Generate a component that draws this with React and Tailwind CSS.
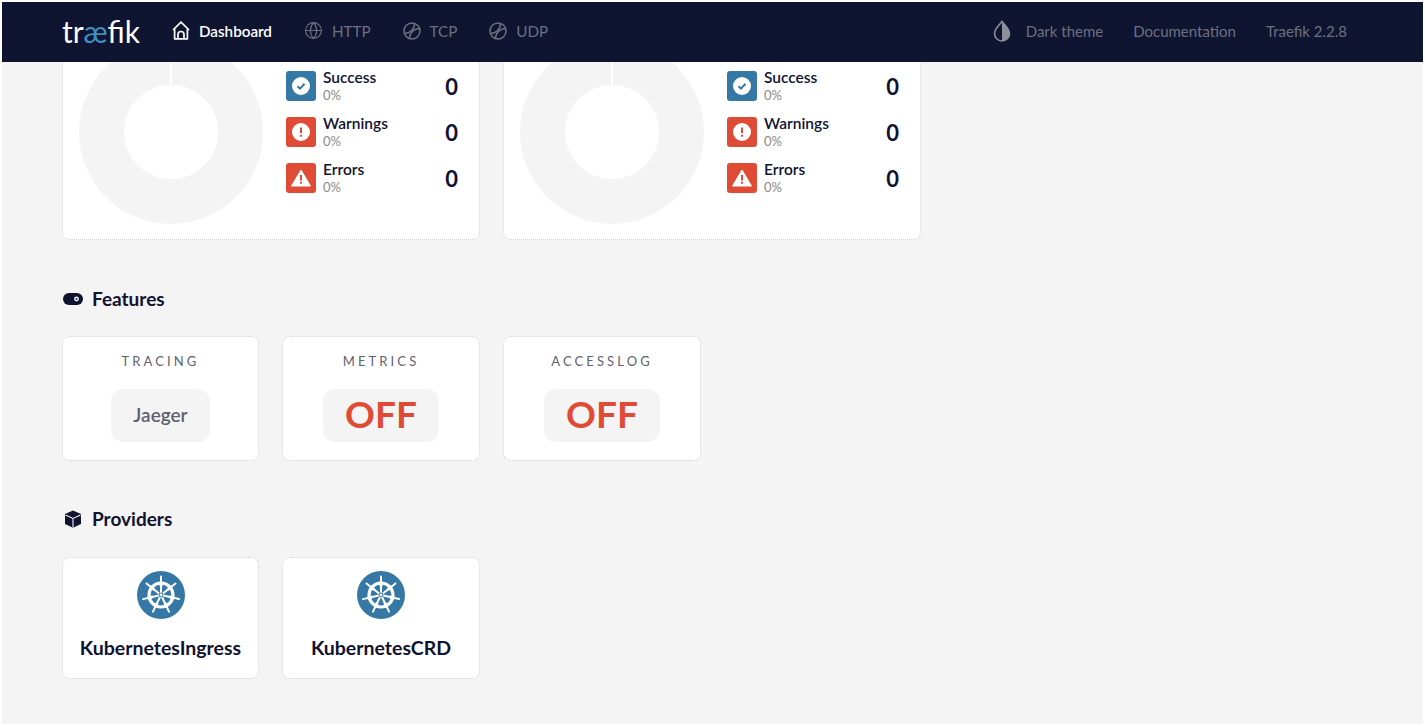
import React from "react";
import { Globe } from "lucide-react";

const font = "font-['Lato','Noto_Sans',sans-serif]";

const HomeIcon = () => (
  <svg width="18" height="19" viewBox="0 0 18 19" fill="none" stroke="currentColor" strokeWidth="1.7" strokeLinejoin="round">
    <path d="M1 9 9 1.2 17 9M2.6 8v9.8h12.8V8" />
    <path d="M6 17.8v-4.3a3 3 0 0 1 6 0v4.3" />
  </svg>
);

const BallIcon = () => (
  <svg width="18" height="18" viewBox="0 0 18 18" fill="none" stroke="currentColor" strokeWidth="1.5">
    <circle cx="9" cy="9" r="8" />
    <path d="M11.5 1.4C11.5 7 7 11.5 1.4 11.5" />
    <path d="M16.6 6.5C11 6.5 6.5 11 6.5 16.6" />
  </svg>
);

const DropIcon = () => (
  <svg width="18" height="22" viewBox="0 0 18 22">
    <path d="M9 1.5C6.5 5 1.5 8.5 1.5 13.5a7.5 7.5 0 0 0 15 0C16.5 8.5 11.5 5 9 1.5Z" fill="none" stroke="#8d8f99" strokeWidth="1.6" />
    <path d="M9 1.5C11.5 5 16.5 8.5 16.5 13.5A7.5 7.5 0 0 1 9 21Z" fill="#8d8f99" />
  </svg>
);

const ToggleIcon = () => (
  <svg width="20" height="12" viewBox="0 0 20 12" className="ml-[1px]">
    <rect width="20" height="12" rx="6" fill="#10132f" />
    <circle cx="13.5" cy="6" r="2.4" fill="#f4f4f4" />
    <circle cx="13.5" cy="6" r="0.9" fill="#10132f" />
  </svg>
);

const CubeIcon = () => (
  <svg width="18" height="18" viewBox="0 0 18 18" className="ml-[2px]">
    <path d="M9 .5 17 4v10l-8 3.7L1 14V4Z" fill="#10132f" />
    <path d="M1.5 5 9 8.5 16.5 5M9 8.5V17.5" fill="none" stroke="#f4f4f4" strokeWidth="1.1" />
  </svg>
);

const Helm = () => (
  <svg width="48" height="48" viewBox="0 0 48 48">
    <circle cx="24" cy="24" r="24" fill="#3578a5" />
    <g stroke="#fff" strokeLinecap="round">
      <circle cx="24" cy="24" r="12" fill="none" strokeWidth="3.2" />
      {[0, 51.4, 102.8, 154.3, 205.7, 257.1, 308.6].map((a) => (
        <g key={a} transform={`rotate(${a} 24 24)`}>
          <path d="M24 24V5.5" strokeWidth="2" />
          <path d="M24 14.5v-3" strokeWidth="3" />
        </g>
      ))}
    </g>
    <circle cx="24" cy="24" r="2.4" fill="#3578a5" />
    <circle cx="24" cy="24" r="1.4" fill="#fff" />
  </svg>
);

const StatusIcon = ({ kind }) => {
  if (kind === "success") {
    return (
      <svg width="18" height="18" viewBox="0 0 18 18">
        <circle cx="9" cy="9" r="9" fill="#fff" />
        <path d="M5.5 9.2 8 11.6l4.5-4.8" fill="none" stroke="#3578a5" strokeWidth="2" />
      </svg>
    );
  }
  if (kind === "warning") {
    return (
      <svg width="18" height="18" viewBox="0 0 18 18">
        <circle cx="9" cy="9" r="9" fill="#fff" />
        <path d="M9 4.5v5.5M9 11.7v2" stroke="#e04b35" strokeWidth="2" />
      </svg>
    );
  }
  return (
    <svg width="20" height="18" viewBox="0 0 20 18">
      <path d="M10 1 19.5 17H.5Z" fill="#fff" stroke="#fff" strokeLinejoin="round" />
      <path d="M10 6v5.5M10 12.8v2" stroke="#e04b35" strokeWidth="2" />
    </svg>
  );
};

const NavItem = ({ icon, label, active }) => (
  <a href="#" className={`flex items-center gap-[9px] text-[15.2px] ${active ? "text-white font-semibold" : "text-[#6d7080]"}`}>
    {icon}
    <span>{label}</span>
  </a>
);

const Donut = () => (
  <svg width="184" height="184" viewBox="0 0 184 184" className="shrink-0">
    <circle cx="92" cy="92" r="69.5" fill="none" stroke="#f4f4f4" strokeWidth="45" />
    <path d="M92 0v46" stroke="#fff" strokeWidth="2" />
  </svg>
);

const rows = [
  { name: "Success", kind: "success", bg: "bg-[#3578a5]" },
  { name: "Warnings", kind: "warning", bg: "bg-[#e04b35]" },
  { name: "Errors", kind: "error", bg: "bg-[#e04b35]" },
];

const StatsCard = () => (
  <div className="w-[418px] h-[218px] flex gap-[23px] pt-[17px] pl-[16px] pr-[21px] bg-white rounded-lg border border-dotted border-[#cfcfcf]">
    <Donut />
    <div className="flex-1 flex flex-col gap-[16px] pt-[31px]">
      {rows.map((r) => (
        <div key={r.name} className="flex items-center h-[30px]">
          <div className={`w-[30px] h-[30px] rounded-[3px] flex items-center justify-center ${r.bg}`}>
            <StatusIcon kind={r.kind} />
          </div>
          <div className="ml-[7px] mb-[1px] flex-1 flex flex-col">
            <span className="text-[15.5px] leading-[17px] font-semibold text-[#10132f]">{r.name}</span>
            <span className="mt-[1px] text-[13px] leading-[16px] text-[#8a8a8a]">0%</span>
          </div>
          <span className="text-[22px] font-bold text-[#10132f]">0</span>
        </div>
      ))}
    </div>
  </div>
);

const FeatureCard = ({ label, value, off }) => (
  <div className="h-[125px] bg-white rounded-lg border border-dotted border-[#cfcfcf] flex flex-col items-center pt-[15px]">
    <div className="text-[13px] leading-[18px] tracking-[0.24em] text-[#5f616e]">{label}</div>
    {off ? (
      <div className="mt-[19px] h-[53px] w-[116px] pb-[4px] rounded-xl bg-[#f4f4f4] flex items-center justify-center text-[37px] font-bold text-[#e04b35]">{value}</div>
    ) : (
      <div className="mt-[19px] h-[53px] w-[99px] rounded-xl bg-[#f4f4f4] flex items-center justify-center text-[19px] font-semibold text-[#5f616e]">{value}</div>
    )}
  </div>
);

const ProviderCard = ({ name }) => (
  <div className="h-[122px] bg-white rounded-lg border border-dotted border-[#cfcfcf] flex flex-col items-center pt-[13px]">
    <Helm />
    <div className="mt-[16px] text-[19.5px] leading-[26px] font-bold text-[#10132f]">{name}</div>
  </div>
);

export default function App() {
  return (
    <div className={`h-[726px] flex flex-col overflow-hidden bg-[#f4f4f4] border-2 border-white ${font}`}>
      <header className="relative z-10 h-[60px] shrink-0 bg-[#0f1431] flex items-center justify-between pb-[2px] pl-[60px] pr-[76px]">
        <div className="flex items-center">
          <a href="#" className="w-[110px] text-[30px] leading-none text-white">
            tr<span className="text-[#3f8fc4]">æ</span>fik
          </a>
          <div className="flex items-center gap-[32px]">
            <NavItem active icon={<HomeIcon />} label="Dashboard" />
            <NavItem icon={<Globe size={19} strokeWidth={1.4} />} label="HTTP" />
            <NavItem icon={<BallIcon />} label="TCP" />
            <NavItem icon={<BallIcon />} label="UDP" />
          </div>
        </div>
        <div className="flex items-center gap-[30px] text-[15px] text-[#6d7080]">
          <a href="#" className="flex items-center gap-[15px]">
            <DropIcon />
            <span>Dark theme</span>
          </a>
          <a href="#">Documentation</a>
          <span>Traefik 2.2.8</span>
        </div>
      </header>

      <main className="flex-1 overflow-hidden pl-[60px]">
        <div className="flex gap-[23px] -mt-[40px]">
          <StatsCard />
          <StatsCard />
        </div>

        <h2 className="mt-[47px] h-[24px] flex items-center gap-[9px] text-[19px] font-bold text-[#10132f]">
          <ToggleIcon />
          Features
        </h2>
        <div className="mt-[25px] grid grid-cols-[197px_198px_198px] gap-[23px] w-fit">
          <FeatureCard label="TRACING" value="Jaeger" />
          <FeatureCard label="METRICS" value="OFF" off />
          <FeatureCard label="ACCESSLOG" value="OFF" off />
        </div>

        <h2 className="mt-[46px] h-[24px] flex items-center gap-[10px] text-[19px] font-bold text-[#10132f]">
          <CubeIcon />
          Providers
        </h2>
        <div className="mt-[26px] grid grid-cols-[197px_198px] gap-[23px] w-fit">
          <ProviderCard name="KubernetesIngress" />
          <ProviderCard name="KubernetesCRD" />
        </div>
      </main>
    </div>
  );
}
